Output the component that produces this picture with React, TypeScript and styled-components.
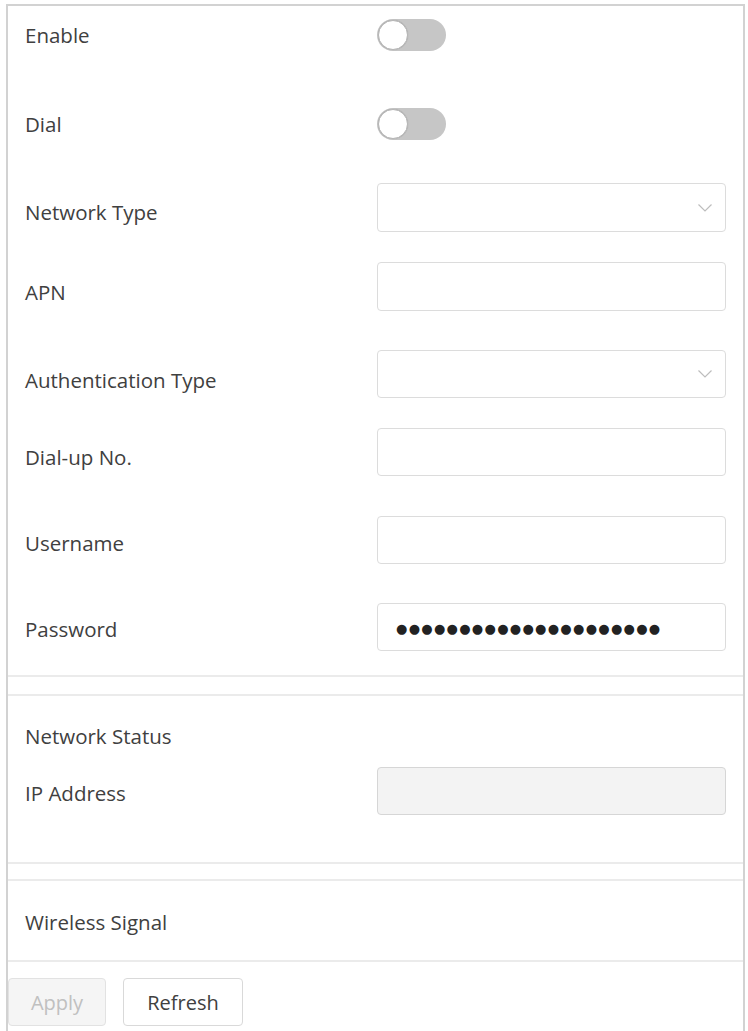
import React from "react";
import styled, { createGlobalStyle } from "styled-components";

const GlobalStyle = createGlobalStyle`
  html, body { margin: 0; padding: 0; background: #ffffff; }
  body { font-family: "Open Sans", "Noto Sans", sans-serif; color: #404040; }
  * { box-sizing: border-box; }
`;

const Frame = styled.div`
  margin: 4px 0 0 6px;
  width: 739px;
  height: 1027px;
  border: 2px solid #d2d2d2;
  border-bottom: none;
  display: flex;
  flex-direction: column;
  overflow: hidden;
`;

const Row = styled.div<{ $mt: number; $h: number }>`
  display: flex;
  align-items: center;
  height: ${(p) => p.$h}px;
  margin-top: ${(p) => p.$mt}px;
  padding-left: 17px;
`;

const Label = styled.div<{ $dy?: number }>`
  width: 352px;
  flex: none;
  font-size: 20.5px;
  line-height: 28px;
  color: #404040;
  padding-top: ${(p) => p.$dy ?? 0}px;
`;

const Toggle = styled.div`
  width: 69px;
  height: 32px;
  border-radius: 16px;
  background: #c6c6c6;
  display: flex;
  align-items: center;
  padding-left: 1px;
`;

const Knob = styled.div`
  width: 30px;
  height: 30px;
  border-radius: 50%;
  background: #ffffff;
  border: 1px solid #b5b5b5;
  box-shadow: 0 0 1px rgba(0, 0, 0, 0.2);
`;

const Box = styled.div<{ $disabled?: boolean }>`
  width: 349px;
  height: 100%;
  border: 1px solid ${(p) => (p.$disabled ? "#d6d6d6" : "#dcdcdc")};
  border-radius: 4px;
  background: ${(p) => (p.$disabled ? "#f3f3f3" : "#ffffff")};
  display: flex;
  align-items: center;
  justify-content: space-between;
  padding: 0 12px 0 18px;
`;

const Dots = styled.span`
  font-family: "DejaVu Sans", sans-serif;
  font-size: 13px;
  letter-spacing: 1.3px;
  color: #222222;
  line-height: 1;
  padding-top: 2px;
`;

const Chevron = () => (
  <svg width="16" height="10" viewBox="0 0 16 10" fill="none">
    <path d="M1.5 1.5 L8 8 L14.5 1.5" stroke="#bdbdbd" strokeWidth="1.2" />
  </svg>
);

const Divider = styled.div<{ $mt: number }>`
  height: 2px;
  background: #ebebeb;
  margin-top: ${(p) => p.$mt}px;
  flex: none;
`;

const Heading = styled.div<{ $mt: number }>`
  font-size: 20.5px;
  line-height: 28px;
  color: #404040;
  padding-left: 17px;
  margin-top: ${(p) => p.$mt}px;
`;

const ButtonBar = styled.div`
  display: flex;
  gap: 17px;
  margin-top: 16px;
`;

const Button = styled.button<{ $disabled?: boolean; $w: number }>`
  width: ${(p) => p.$w}px;
  height: 48px;
  border-radius: 4px;
  font-family: "Open Sans", "Noto Sans", sans-serif;
  font-size: 20px;
  border: 1px solid ${(p) => (p.$disabled ? "#e2e2e2" : "#d9d9d9")};
  background: ${(p) => (p.$disabled ? "#f5f5f5" : "#ffffff")};
  color: ${(p) => (p.$disabled ? "#c0c0c0" : "#404040")};
  padding: 0;
  cursor: pointer;
`;

const fields: { label: string; mt: number; h: number; dy: number; kind: "select" | "input" | "password" }[] = [
  { label: "Network Type", mt: 43, h: 49, dy: 9, kind: "select" },
  { label: "APN", mt: 30, h: 49, dy: 11, kind: "input" },
  { label: "Authentication Type", mt: 39, h: 48, dy: 12, kind: "select" },
  { label: "Dial-up No.", mt: 30, h: 48, dy: 10, kind: "input" },
  { label: "Username", mt: 40, h: 48, dy: 6, kind: "input" },
  { label: "Password", mt: 39, h: 48, dy: 4, kind: "password" },
];

export default function App() {
  return (
    <>
      <GlobalStyle />
      <Frame>
        <Row $mt={13} $h={32}>
          <Label>Enable</Label>
          <Toggle>
            <Knob />
          </Toggle>
        </Row>
        <Row $mt={57} $h={32}>
          <Label>Dial</Label>
          <Toggle>
            <Knob />
          </Toggle>
        </Row>
        {fields.map((f) => (
          <Row key={f.label} $mt={f.mt} $h={f.h}>
            <Label $dy={f.dy}>{f.label}</Label>
            <Box>
              {f.kind === "select" && (
                <>
                  <span />
                  <Chevron />
                </>
              )}
              {f.kind === "password" && <Dots>{"●".repeat(21)}</Dots>}
            </Box>
          </Row>
        ))}
        <Divider $mt={24} />
        <Divider $mt={17} />
        <Heading $mt={26}>Network Status</Heading>
        <Row $mt={17} $h={48}>
          <Label $dy={4}>IP Address</Label>
          <Box $disabled />
        </Row>
        <Divider $mt={47} />
        <Divider $mt={15} />
        <Heading $mt={27}>Wireless Signal</Heading>
        <Divider $mt={24} />
        <ButtonBar>
          <Button $disabled $w={98}>Apply</Button>
          <Button $w={120}>Refresh</Button>
        </ButtonBar>
      </Frame>
    </>
  );
}
